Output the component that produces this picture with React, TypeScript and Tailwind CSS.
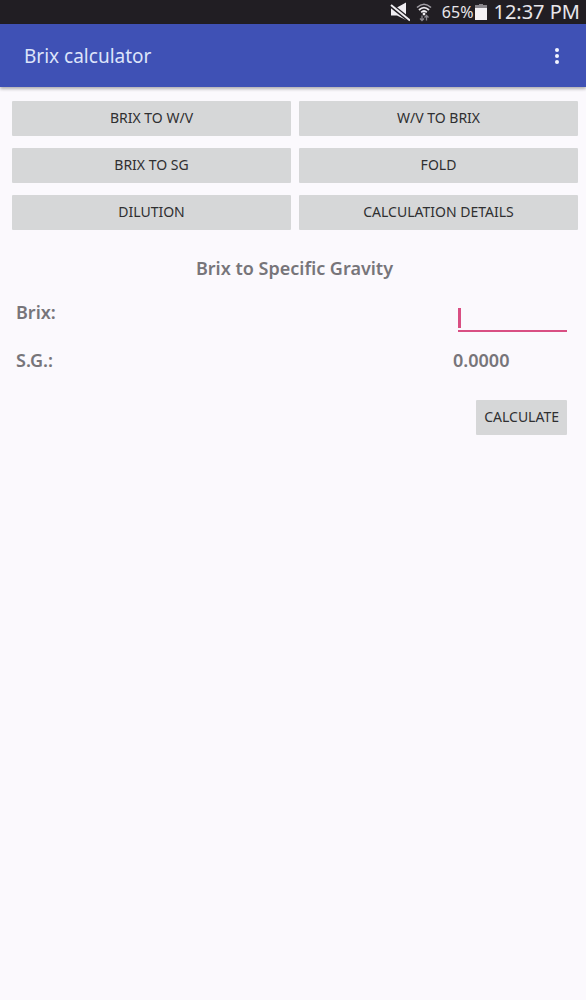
import { useState } from "react";

const modes = [
  "Brix to W/V",
  "W/V to Brix",
  "Brix to SG",
  "Fold",
  "Dilution",
  "Calculation details",
];

function StatusBar() {
  return (
    <div className="flex h-6 items-center justify-end bg-[#211e23] pr-1.5 text-[#e8e6ea]">
      <svg className="mr-1.5 h-5 w-5" viewBox="0 0 20 20" aria-hidden="true">
        <path d="M1 5.500h6l9-5v17.500l-9-4.500H1z" fill="#f0eef2" />
        <path d="M0 2.500L20 18.500" stroke="#211e23" strokeWidth="4.600" />
        <path d="M1 3L20 18.500" stroke="#f0eef2" strokeWidth="2" />
      </svg>
      <svg className="mr-2.5 h-5 w-4" viewBox="0 0 16 20" fill="none" aria-hidden="true">
        <path d="M1 5.500Q8 -1 15 5.500" stroke="#a3a0a7" strokeWidth="1.600" />
        <path d="M3 8Q8 3.200 13 8" stroke="#e8e6ea" strokeWidth="1.800" />
        <path d="M5.200 10.300Q8 7.800 10.800 10.300" stroke="#f0eef2" strokeWidth="1.800" />
        <circle cx="8" cy="12" r="1.400" fill="#f0eef2" />
        <path d="M6 13.500v5M4 16.500l2 2 2-2M10.500 18.500v-5M8.500 15.500l2-2 2 2" stroke="#8b888f" strokeWidth="1.300" />
      </svg>
      <span className="text-[16px] leading-6">65%</span>
      <svg className="ml-0.5 h-4 w-3" viewBox="0 0 12 16" aria-hidden="true">
        <path d="M4 0h4v1h4v4H0V1h4z" fill="#88858b" />
        <path d="M0 4h12v12H0z" fill="#f4f2f5" />
      </svg>
      <span className="ml-1.5 text-[20px] leading-6">12:37 PM</span>
    </div>
  );
}

export default function App() {
  const [mode, setMode] = useState("Brix to SG");
  const [brix, setBrix] = useState("");
  const [gravity, setGravity] = useState(0);

  const calculate = () => {
    const b = parseFloat(brix);
    setGravity(Number.isNaN(b) ? 0 : 1 + b / (258.6 - (b / 258.2) * 227.1));
  };

  return (
    <div className="min-h-screen bg-[#fbf9fd] font-['Noto_Sans',sans-serif] text-[#2f2f31]">
      <StatusBar />
      <header className="flex h-[63px] items-center justify-between bg-[#3f51b5] pr-[19px] pl-6 shadow-[0_2px_3px_#0000004d]">
        <h1 className="text-[19px] leading-6 text-[#dde4fa]">Brix calculator</h1>
        <button type="button" aria-label="More options" className="flex h-8 w-5 items-center justify-center">
          <svg className="h-4 w-1" viewBox="0 0 4 16" fill="#f3f5ff" aria-hidden="true">
            <circle cx="2" cy="2" r="2" />
            <circle cx="2" cy="8" r="2" />
            <circle cx="2" cy="14" r="2" />
          </svg>
        </button>
      </header>
      <main>
        <nav className="grid grid-cols-2 gap-x-2 gap-y-3 pt-3.5 pr-2 pl-3">
          {modes.map((m) => (
            <button
              key={m}
              type="button"
              aria-pressed={m === mode}
              onClick={() => setMode(m)}
              className="h-[35px] rounded-[1px] bg-[#d6d7d8] pb-0.5 text-[14px] leading-5 uppercase"
            >
              {m}
            </button>
          ))}
        </nav>
        <form
          className="pt-6.5 pr-[19px] pl-4 text-[18px] leading-6 font-semibold text-[#77757a]"
          onSubmit={(e) => {
            e.preventDefault();
            calculate();
          }}
        >
          <h2 className="pl-1.5 text-center">Brix to Specific Gravity</h2>
          <div className="mt-5 flex h-8 items-start justify-between">
            <label htmlFor="brix">Brix:</label>
            <div className="relative">
              <input
                id="brix"
                inputMode="decimal"
                value={brix}
                onChange={(e) => setBrix(e.target.value)}
                className="h-8 w-[109px] border-b-2 border-[#d94f83] bg-transparent caret-[#d94f83] outline-none"
              />
              {brix === "" && (
                <span className="pointer-events-none absolute top-2 left-0 h-5 w-[3px] bg-[#d94f83]" />
              )}
            </div>
          </div>
          <div className="mt-4 flex justify-between">
            <span>S.G.:</span>
            <output htmlFor="brix" className="w-[114px]">
              {gravity.toFixed(4)}
            </output>
          </div>
          <div className="mt-7 flex justify-end">
            <button
              type="submit"
              className="h-[35px] rounded-[1px] bg-[#d6d7d8] px-2 pb-0.5 text-[14px] leading-5 font-normal text-[#2f2f31] uppercase"
            >
              Calculate
            </button>
          </div>
        </form>
      </main>
    </div>
  );
}
